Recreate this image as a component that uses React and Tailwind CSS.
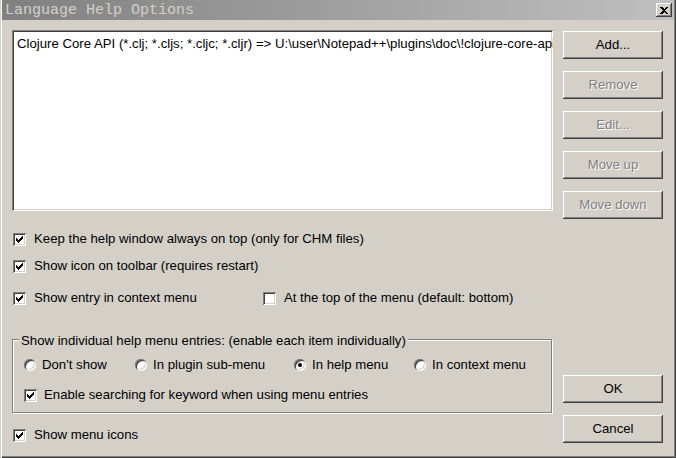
import React from "react";

const font = { fontFamily: '"Liberation Sans", Arial, sans-serif' };

const raised =
  "shadow-[inset_-1px_-1px_#404040,inset_1px_1px_#ffffff,inset_-2px_-2px_#808080,inset_2px_2px_#d4d0c8]";
const sunken =
  "shadow-[inset_1px_1px_#808080,inset_-1px_-1px_#ffffff,inset_2px_2px_#404040,inset_-2px_-2px_#d4d0c8]";

// classic 7x7 check mark, one rect per pixel row run
const checkRows = [
  [6, 1],
  [5, 2],
  [0, 1, 4, 3],
  [0, 2, 3, 3],
  [0, 5],
  [1, 3],
  [2, 1],
];

function Check({ checked }) {
  return (
    <span className={`w-[13px] h-[13px] bg-white shrink-0 flex items-center justify-center ${sunken}`}>
      {checked && (
        <svg width="7" height="7" viewBox="0 0 7 7" shapeRendering="crispEdges">
          {checkRows.map((row, y) => {
            const rects = [];
            for (let i = 0; i < row.length; i += 2) {
              rects.push(<rect key={`${y}-${i}`} x={row[i]} y={y} width={row[i + 1]} height="1" fill="#000" />);
            }
            return rects;
          })}
        </svg>
      )}
    </span>
  );
}

function Radio({ checked }) {
  return (
    <span className="w-[12px] h-[12px] rounded-full bg-white shrink-0 flex items-center justify-center shadow-[inset_1px_1px_#808080,inset_-1px_-1px_#ffffff,inset_2px_2px_#404040,inset_-2px_-2px_#d4d0c8]">
      {checked && <span className="w-[4px] h-[4px] rounded-full bg-black" />}
    </span>
  );
}

function Button({ children, disabled }) {
  return (
    <div
      className={`w-[100px] h-[28px] flex items-center justify-center bg-[#d4d0c8] ${raised} ${
        disabled ? "text-[#808080] [text-shadow:1px_1px_0_#ffffff]" : "text-black"
      }`}
    >
      {children}
    </div>
  );
}

function CheckRow({ checked, label, className = "" }) {
  return (
    <div className={`h-[20px] flex items-center gap-[8px] ${className}`}>
      <Check checked={checked} />
      <span>{label}</span>
    </div>
  );
}

function RadioItem({ checked, label, width }) {
  return (
    <div className={`h-[20px] flex items-center gap-[6px] ${width}`}>
      <Radio checked={checked} />
      <span>{label}</span>
    </div>
  );
}

export default function App() {
  return (
    <div
      className="w-[676px] h-[458px] bg-[#d4d0c8] text-[13.2px] text-black flex flex-col overflow-hidden shadow-[inset_1px_0_#d4d0c8,inset_2px_0_#ffffff,inset_-1px_-1px_#404040,inset_-2px_-2px_#808080]"
      style={font}
    >
      {/* title bar */}
      <div className="h-[20px] mx-[2px] flex items-center justify-between bg-gradient-to-r from-[#808080] to-[#c0c0c0] pl-[3px] pr-[2px]">
        <span
          className="text-[15px] text-[#d4d0c8] leading-none"
          style={{ fontFamily: '"Liberation Mono", "Courier New", monospace' }}
        >
          Language Help Options
        </span>
        <div className={`w-[16px] h-[14px] bg-[#d4d0c8] flex items-center justify-center ${raised}`}>
          <svg width="8" height="7" viewBox="0 0 8 7" shapeRendering="crispEdges">
            <path d="M0 0h2l2 2 2-2h2L5 3.5 8 7H6L4 5 2 7H0l3-3.5z" fill="#000" />
          </svg>
        </div>
      </div>

      <div className="flex pl-[12px] pt-[10px] gap-[10px]">
        {/* left column */}
        <div className="w-[541px] flex flex-col">
          <div className={`h-[181px] bg-white px-[5px] pt-[4px] overflow-hidden whitespace-nowrap ${sunken}`}>
            Clojure Core API (*.clj; *.cljs; *.cljc; *.cljr) =&gt; U:\user\Notepad++\plugins\doc\!clojure-core-api
          </div>

          <CheckRow checked label="Keep the help window always on top (only for CHM files)" className="mt-[18px] ml-[1px]" />
          <CheckRow checked label="Show icon on toolbar (requires restart)" className="mt-[7px] ml-[1px]" />
          <div className="flex mt-[12px] ml-[1px]">
            <CheckRow checked label="Show entry in context menu" className="w-[250px]" />
            <CheckRow checked={false} label="At the top of the menu (default: bottom)" />
          </div>

          {/* group box */}
          <div className="relative mt-[31px] w-[540px] border border-[#808080] shadow-[inset_1px_1px_#ffffff,1px_1px_#ffffff] pt-[15px] pb-[7px] pl-[11px]">
            <span className="absolute -top-[9px] left-[6px] px-[2px] bg-[#d4d0c8]">
              Show individual help menu entries: (enable each item individually)
            </span>
            <div className="flex">
              <RadioItem label="Don't show" width="w-[111px]" />
              <RadioItem label="In plugin sub-menu" width="w-[159px]" />
              <RadioItem checked label="In help menu" width="w-[120px]" />
              <RadioItem label="In context menu" width="" />
            </div>
            <div className="h-[20px] flex items-center gap-[7px] mt-[10px]">
              <Check checked />
              <span>Enable searching for keyword when using menu entries</span>
            </div>
          </div>

          <CheckRow checked label="Show menu icons" className="mt-[12px] ml-[1px]" />
        </div>

        {/* right column */}
        <div className="flex flex-col pt-[1px]">
          <div className="flex flex-col gap-[12px]">
            <Button>Add...</Button>
            <Button disabled>Remove</Button>
            <Button disabled>Edit...</Button>
            <Button disabled>Move up</Button>
            <Button disabled>Move down</Button>
          </div>
          <div className="flex flex-col gap-[12px] mt-[156px]">
            <Button>OK</Button>
            <Button>Cancel</Button>
          </div>
        </div>
      </div>
    </div>
  );
}
